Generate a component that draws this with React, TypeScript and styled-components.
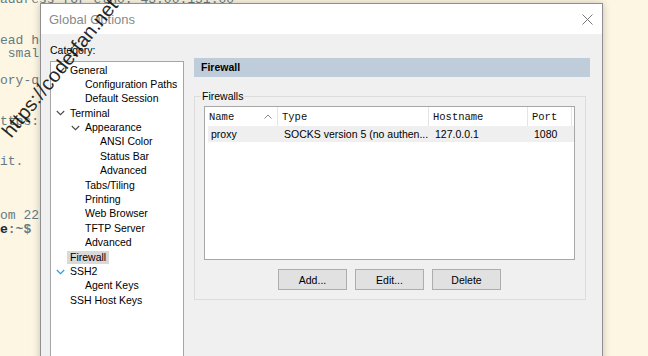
import styled, { createGlobalStyle } from "styled-components"

const GlobalStyle = createGlobalStyle`
  html, body {
    margin: 0;
    padding: 0;
  }
  body {
    width: 648px;
    height: 356px;
    overflow: hidden;
    background: #fdf6e3;
  }
`

const Desktop = styled.div`
  position: relative;
  width: 648px;
  height: 356px;
  overflow: hidden;
  background: #fdf6e3;
`

const Terminal = styled.div`
  margin-top: -7px;
  font-family: "Liberation Mono", monospace;
  font-size: 13px;
  line-height: 13.5px;
  color: #657b83;
  white-space: pre;
`

const TermLine = styled.div`
  height: 13.5px;
`

const Prompt = styled.span`
  font-weight: bold;
  color: #1d2b30;
`

const PromptTail = styled.span`
  font-weight: bold;
`

const Window = styled.div`
  position: absolute;
  left: 40px;
  top: 3px;
  width: 561px;
  height: 400px;
  border: 1px solid #8f8f8f;
  box-shadow: 0 0 8px rgba(0, 0, 0, 0.22);
  background: #f0f0f0;
  display: flex;
  flex-direction: column;
  font-family: "Liberation Sans", Arial, sans-serif;
  font-size: 10.5px;
  color: #000;
`

const TitleBar = styled.div`
  height: 30px;
  flex-shrink: 0;
  background: #fff;
  display: flex;
  align-items: center;
  justify-content: space-between;
  padding-left: 8px;
`

const Title = styled.span`
  font-size: 13px;
  color: #8a8a8a;
`

const CloseButton = styled.div`
  width: 30px;
  height: 30px;
  display: flex;
  align-items: center;
  justify-content: center;
`

const Body = styled.div`
  display: flex;
  gap: 10px;
  padding: 9px 12px 0 9px;
`

const LeftColumn = styled.div`
  width: 134px;
  display: flex;
  flex-direction: column;
`

const FieldLabel = styled.div`
  height: 14px;
  line-height: 14px;
  margin-bottom: 4px;
`

const Tree = styled.div`
  height: 320px;
  border: 1px solid #a5a5a5;
  background: #fff;
  padding-top: 1px;
`

const TreeRow = styled.div<{ $level: number }>`
  height: 14.4px;
  display: flex;
  align-items: center;
  padding-left: ${p => 5 + p.$level * 15}px;
`

const Toggle = styled.span`
  width: 14px;
  flex-shrink: 0;
  display: flex;
  align-items: center;
`

const TreeLabel = styled.span<{ $selected?: boolean }>`
  margin-left: -3px;
  padding: 0 3px;
  height: 13.4px;
  line-height: 13.4px;
  white-space: nowrap;
  background: ${p => (p.$selected ? "#d9d9d9" : "transparent")};
`

const RightColumn = styled.div`
  flex: 1;
  margin-top: 15px;
  display: flex;
  flex-direction: column;
`

const PageHeader = styled.div`
  height: 19px;
  line-height: 19px;
  background: #bfcddb;
  padding-left: 7px;
  font-weight: bold;
`

const GroupBox = styled.fieldset`
  margin: 12px 4px 0 0;
  padding: 3px 10px 9px 9px;
  border: 1px solid #dcdcdc;
  min-width: 0;
`

const Legend = styled.legend`
  margin-left: -3px;
  padding: 0 1px;
  line-height: 14px;
`

const ListView = styled.div`
  height: 152px;
  border: 1px solid #a7a7a7;
  background: #fff;
`

const HeaderRow = styled.div`
  display: grid;
  grid-template-columns: 73px 151px 99px 44px;
  height: 19px;
`

const HeaderCell = styled.div`
  display: flex;
  align-items: center;
  justify-content: space-between;
  padding: 0 5px 0 4px;
  border-right: 1px solid #e5e5e5;
  font-family: "Liberation Mono", monospace;
  font-size: 10.5px;
  color: #111;
`

const DataRow = styled.div`
  display: grid;
  grid-template-columns: 70px 151px 99px 44px;
  margin-left: 3px;
  height: 16px;
  line-height: 16px;
  background: #efefef;
`

const DataCell = styled.div`
  padding-left: 6px;
  white-space: nowrap;
  overflow: hidden;

  &:first-child {
    padding-left: 3px;
  }
`

const ButtonRow = styled.div`
  display: flex;
  justify-content: center;
  gap: 8px;
  margin-top: 9px;
`

const Button = styled.button`
  width: 69px;
  height: 21px;
  padding: 0;
  background: #e1e1e1;
  border: 1px solid #adadad;
  font-family: "Liberation Sans", Arial, sans-serif;
  font-size: 10.5px;
  color: #000;
`

const Watermark = styled.div`
  position: absolute;
  left: 60px;
  top: 68px;
  transform: translate(-50%, -50%) rotate(-51deg);
  font-family: "Liberation Sans", Arial, sans-serif;
  font-size: 20px;
  color: rgba(0, 0, 0, 0.85);
  white-space: nowrap;
  z-index: 10;
  pointer-events: none;
`

type Node = { label: string; level: number; open?: boolean; hover?: boolean; selected?: boolean }

const tree: Node[] = [
  { label: "General", level: 0, open: true },
  { label: "Configuration Paths", level: 1 },
  { label: "Default Session", level: 1 },
  { label: "Terminal", level: 0, open: true },
  { label: "Appearance", level: 1, open: true },
  { label: "ANSI Color", level: 2 },
  { label: "Status Bar", level: 2 },
  { label: "Advanced", level: 2 },
  { label: "Tabs/Tiling", level: 1 },
  { label: "Printing", level: 1 },
  { label: "Web Browser", level: 1 },
  { label: "TFTP Server", level: 1 },
  { label: "Advanced", level: 1 },
  { label: "Firewall", level: 0, selected: true },
  { label: "SSH2", level: 0, open: true, hover: true },
  { label: "Agent Keys", level: 1 },
  { label: "SSH Host Keys", level: 0 },
]

const termLines = [
  "address for eth0: 43.00.151.00",
  "",
  "",
  "ead help for the command line",
  " small footprint",
  "",
  "ory-quality",
  "",
  "",
  "ttps://ubuntu.com",
  "",
  "",
  "it.",
  "",
  "",
  "",
  "om 222.64.10.5",
]

function Chevron({ color }: { color: string }) {
  return (
    <svg width="9" height="6" viewBox="0 0 9 6">
      <polyline points="0.8,1 4.5,4.7 8.2,1" fill="none" stroke={color} strokeWidth="1.1" />
    </svg>
  )
}

export default function App() {
  return (
    <Desktop>
      <GlobalStyle />
      <Terminal>
        {termLines.map((line, i) => (
          <TermLine key={i}>{line}</TermLine>
        ))}
        <TermLine>
          <Prompt>e</Prompt>
          <PromptTail>:~$</PromptTail>
        </TermLine>
      </Terminal>

      <Window>
        <TitleBar>
          <Title>Global Options</Title>
          <CloseButton>
            <svg width="11" height="11" viewBox="0 0 11 11">
              <path d="M0.5 0.5 L10.5 10.5 M10.5 0.5 L0.5 10.5" stroke="#7a7a7a" strokeWidth="1" />
            </svg>
          </CloseButton>
        </TitleBar>

        <Body>
          <LeftColumn>
            <FieldLabel>Category:</FieldLabel>
            <Tree>
              {tree.map((node, i) => (
                <TreeRow key={i} $level={node.level}>
                  <Toggle>{node.open && <Chevron color={node.hover ? "#1c9de4" : "#4a4a4a"} />}</Toggle>
                  <TreeLabel $selected={node.selected}>{node.label}</TreeLabel>
                </TreeRow>
              ))}
            </Tree>
          </LeftColumn>

          <RightColumn>
            <PageHeader>Firewall</PageHeader>
            <GroupBox>
              <Legend>Firewalls</Legend>
              <ListView>
                <HeaderRow>
                  <HeaderCell>
                    Name
                    <svg width="8" height="5" viewBox="0 0 8 5">
                      <polyline points="0.5,4.5 4,1 7.5,4.5" fill="none" stroke="#888" strokeWidth="1" />
                    </svg>
                  </HeaderCell>
                  <HeaderCell>Type</HeaderCell>
                  <HeaderCell>Hostname</HeaderCell>
                  <HeaderCell>Port</HeaderCell>
                </HeaderRow>
                <DataRow>
                  <DataCell>proxy</DataCell>
                  <DataCell>SOCKS version 5 (no authen...</DataCell>
                  <DataCell>127.0.0.1</DataCell>
                  <DataCell>1080</DataCell>
                </DataRow>
              </ListView>
              <ButtonRow>
                <Button>Add...</Button>
                <Button>Edit...</Button>
                <Button>Delete</Button>
              </ButtonRow>
            </GroupBox>
          </RightColumn>
        </Body>
      </Window>

      <Watermark>https://coderfan.net</Watermark>
    </Desktop>
  )
}
